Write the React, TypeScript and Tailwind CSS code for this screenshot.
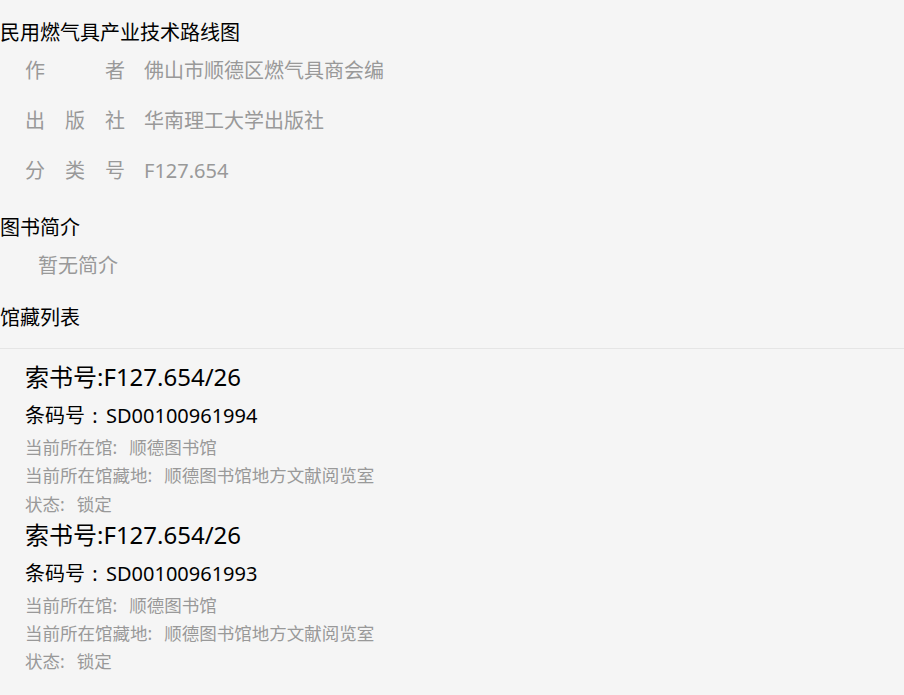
import React from "react";

const font = { fontFamily: '"Noto Sans", "Noto Sans CJK SC", sans-serif' };

function InfoRow({ label, value }: { label: string[]; value: string }) {
  return (
    <div className="flex items-center h-[50px] pl-[25px] text-[20px] text-[#999999]">
      <div className="w-[100px] flex justify-between">
        {label.map((c, i) => (
          <span key={i} className="w-[20px] text-center">
            {c}
          </span>
        ))}
      </div>
      <div className="ml-[19px]">{value}</div>
    </div>
  );
}

function Holding({ barcode }: { barcode: string }) {
  return (
    <div className="pl-[25px]">
      <div className="text-[24px] leading-[34px] text-black">索书号:F127.654/26</div>
      <div className="mt-[8px] flex text-[20px] leading-[28px] text-black">
        <span>条码号</span>
        <span className="inline-block w-[20px] text-center">:</span>
        <span className="ml-[1px]">{barcode}</span>
      </div>
      <div className="mt-[3px] text-[17.5px] leading-[28.3px] text-[#999999]">
        <div className="flex">
          <span>当前所在馆:</span>
          <span className="ml-[12px]">顺德图书馆</span>
        </div>
        <div className="flex">
          <span>当前所在馆藏地:</span>
          <span className="ml-[12px]">顺德图书馆地方文献阅览室</span>
        </div>
        <div className="flex">
          <span>状态:</span>
          <span className="ml-[12px]">锁定</span>
        </div>
      </div>
    </div>
  );
}

export default function App() {
  return (
    <div className="min-h-[695px] w-full bg-[#f5f5f5] pt-[20px]" style={font}>
      <div className="text-[20px] leading-[26px] text-black">民用燃气具产业技术路线图</div>
      <InfoRow label={["作", "者"]} value="佛山市顺德区燃气具商会编" />
      <InfoRow label={["出", "版", "社"]} value="华南理工大学出版社" />
      <InfoRow label={["分", "类", "号"]} value="F127.654" />
      <div className="mt-[16px] text-[20px] leading-[32px] text-black">图书简介</div>
      <div className="mt-[6px] pl-[38px] text-[20px] leading-[32px] text-[#999999]">暂无简介</div>
      <div className="mt-[20px] pb-[14px] border-b border-[#e5e5e5]">
        <div className="text-[20px] leading-[32px] text-black">馆藏列表</div>
      </div>
      <div className="pt-[11px]">
        <Holding barcode="SD00100961994" />
        <Holding barcode="SD00100961993" />
      </div>
    </div>
  );
}
